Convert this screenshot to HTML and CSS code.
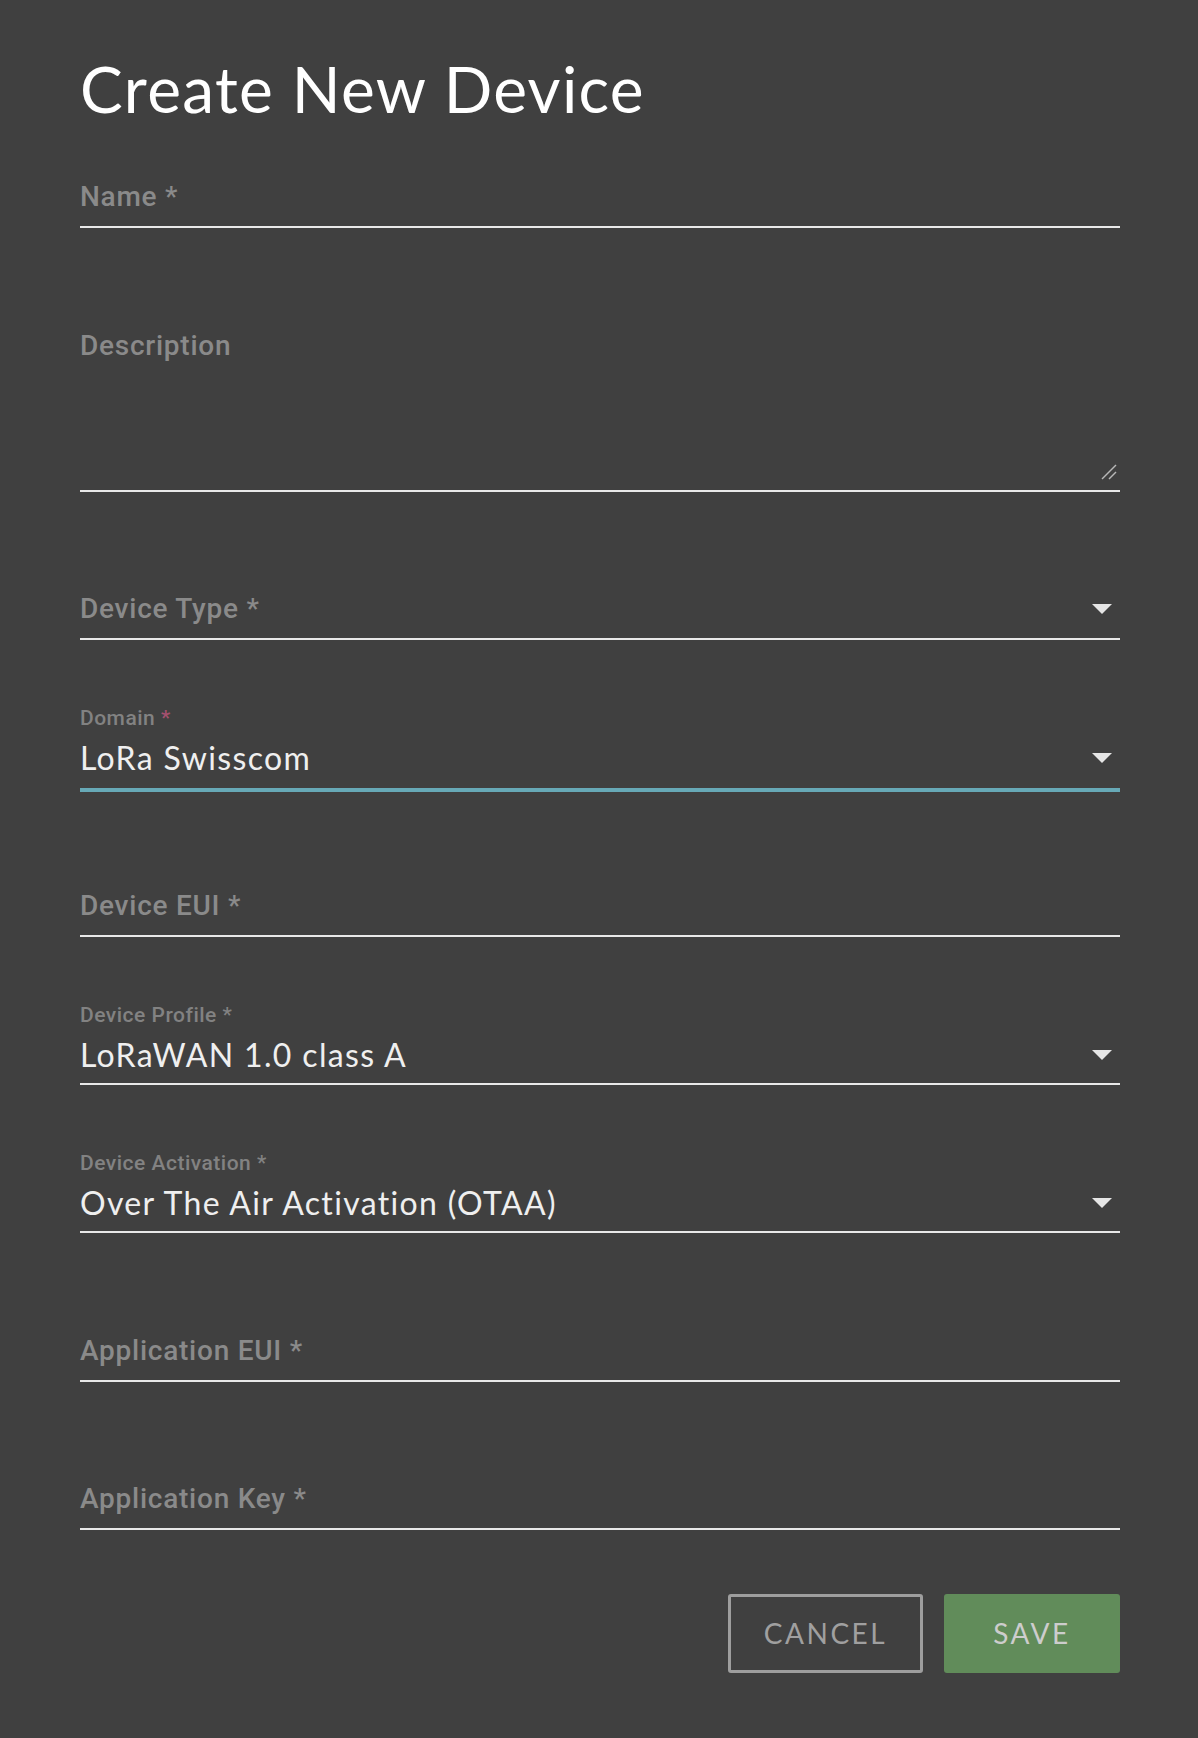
FILE: index.html
```html
<!DOCTYPE html>
<html lang="en">
<head>
<meta charset="utf-8">
<title>Create New Device</title>
<link rel="stylesheet" href="styles.css">
</head>
<body>
<div class="dialog">
  <h1 class="title">Create New Device</h1>
  <form class="form">
    <div class="field">
      <div class="row"><span class="placeholder">Name *</span></div>
    </div>
    <div class="field field-multi">
      <div class="row"><span class="placeholder">Description</span></div>
      <svg class="grip" width="16" height="16" viewBox="0 0 16 16">
        <line x1="15" y1="1" x2="1" y2="15" stroke="#b8b8b8" stroke-width="1.4"/>
        <line x1="15" y1="8" x2="8" y2="15" stroke="#b8b8b8" stroke-width="1.4"/>
      </svg>
    </div>
    <div class="field">
      <div class="row">
        <span class="placeholder">Device Type *</span>
        <svg class="arrow" width="20" height="10" viewBox="0 0 20 10"><path d="M0 0H20L10 10Z" fill="#e6e6e6"/></svg>
      </div>
    </div>
    <div class="field filled focused">
      <div class="small-label">Domain <span class="req">*</span></div>
      <div class="row">
        <span class="value">LoRa Swisscom</span>
        <svg class="arrow" width="20" height="10" viewBox="0 0 20 10"><path d="M0 0H20L10 10Z" fill="#e6e6e6"/></svg>
      </div>
    </div>
    <div class="field">
      <div class="row"><span class="placeholder">Device EUI *</span></div>
    </div>
    <div class="field filled">
      <div class="small-label">Device Profile *</div>
      <div class="row">
        <span class="value">LoRaWAN 1.0 class A</span>
        <svg class="arrow" width="20" height="10" viewBox="0 0 20 10"><path d="M0 0H20L10 10Z" fill="#e6e6e6"/></svg>
      </div>
    </div>
    <div class="field filled">
      <div class="small-label">Device Activation *</div>
      <div class="row">
        <span class="value">Over The Air Activation (OTAA)</span>
        <svg class="arrow" width="20" height="10" viewBox="0 0 20 10"><path d="M0 0H20L10 10Z" fill="#e6e6e6"/></svg>
      </div>
    </div>
    <div class="field">
      <div class="row"><span class="placeholder">Application EUI *</span></div>
    </div>
    <div class="field">
      <div class="row"><span class="placeholder">Application Key *</span></div>
    </div>
    <div class="actions">
      <button type="button" class="btn btn-cancel">CANCEL</button>
      <button type="button" class="btn btn-save">SAVE</button>
    </div>
  </form>
</div>
</body>
</html>
```
FILE: styles.css
```css
html, body {
  margin: 0;
  padding: 0;
  background: #404040;
}
body {
  min-height: 1738px;
}
.dialog {
  width: 1040px;
  margin-left: 80px;
  padding-top: 49px;
}
.title {
  margin: 0;
  font-family: "Lato", "Open Sans", sans-serif;
  font-weight: 400;
  font-size: 64px;
  line-height: 80px;
  height: 78px;
  color: #ffffff;
  letter-spacing: 1.3px;
}
.form {
  display: flex;
  flex-direction: column;
}
.field {
  position: relative;
  box-sizing: border-box;
  height: 148.3px;
  border-bottom: 2px solid #e8e8e8;
  display: flex;
  flex-direction: column;
  justify-content: flex-end;
  padding-bottom: 9px;
}
.field.filled {
  padding-bottom: 8px;
}
.form > .field:first-child {
  height: 100.8px;
}
.field-multi {
  height: 264px;
  justify-content: flex-start;
  padding-top: 98px;
}
.field.focused {
  border-bottom-color: transparent;
}
.field.focused::after {
  content: "";
  position: absolute;
  left: 0;
  right: 0;
  bottom: -6px;
  height: 4px;
  background: #67a9b7;
}
.row {
  display: flex;
  align-items: center;
  height: 40px;
}
.placeholder {
  flex: 1;
  font-family: "Roboto", "Liberation Sans", sans-serif;
  font-weight: 500;
  font-size: 28px;
  line-height: 40px;
  letter-spacing: 0.75px;
  color: #8a8a8a;
}
.value {
  flex: 1;
  font-family: "Lato", "Open Sans", sans-serif;
  font-size: 32px;
  line-height: 40px;
  color: #efefef;
  letter-spacing: 1.35px;
}
.small-label {
  font-family: "Roboto", "Liberation Sans", sans-serif;
  font-weight: 500;
  font-size: 21px;
  line-height: 24px;
  letter-spacing: 0.5px;
  color: #828282;
  margin-bottom: 8px;
}
.req {
  color: #a5506f;
}
.arrow {
  flex: none;
  margin-right: 8px;
}
.grip {
  position: absolute;
  right: 3px;
  bottom: 10px;
}
.actions {
  display: flex;
  justify-content: flex-end;
  gap: 21px;
  margin-top: 64px;
}
.btn {
  box-sizing: border-box;
  height: 79px;
  border-radius: 3px;
  font-family: "Lato", "Open Sans", sans-serif;
  font-size: 28px;
  letter-spacing: 2.5px;
  padding: 0;
  cursor: pointer;
}
.btn-cancel {
  width: 195px;
  background: transparent;
  border: 3px solid #9e9e9e;
  color: #a0a0a0;
}
.btn-save {
  width: 176px;
  background: #618c5a;
  border: none;
  color: #cdcdcd;
}
```
